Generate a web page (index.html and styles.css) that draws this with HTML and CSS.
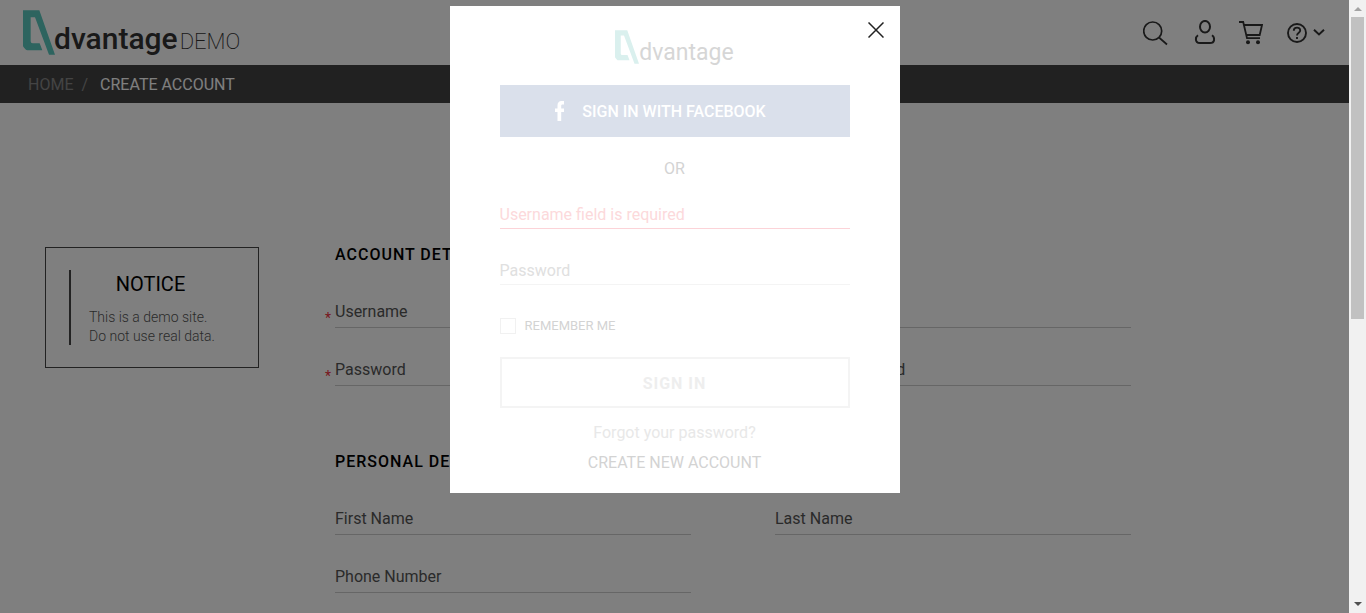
FILE: index.html
```html
<!DOCTYPE html>
<html lang="en">
<head>
<meta charset="utf-8">
<title>Advantage Demo</title>
<link rel="stylesheet" href="styles.css">
</head>
<body>
<svg class="defs" aria-hidden="true">
  <symbol id="brand-mark" viewBox="0 0 96 134">
    <path fill="currentColor" fill-rule="evenodd" d="M0 0H49L96 134H78L36 21H23V93Q23 99 29 99H50L58 120H13Q10 120 8 118L2 111Q0 109 0 106Z"/>
  </symbol>
</svg>
<div class="window">
  <div class="page">
    <header class="header">
      <a class="brand" href="#">
        <svg class="brand-mark"><use href="#brand-mark"/></svg>
        <span class="brand-name">dvantage</span>
        <span class="brand-demo">DEMO</span>
      </a>
      <div class="tools">
        <button class="tool" aria-label="Search">
          <svg width="26" height="26" viewBox="0 0 26 26" fill="none" stroke="currentColor" stroke-width="1.7"><circle cx="9.7" cy="11" r="9"/><path d="M16 17.5L24 24.5"/></svg>
        </button>
        <button class="tool" aria-label="Account">
          <svg width="22" height="26" viewBox="0 0 22 26" fill="none" stroke="currentColor" stroke-width="2"><ellipse cx="12" cy="6.7" rx="5" ry="5.8"/><path d="M5 15.3C3.300 16.500 2.900 17.800 2.900 19.200C2.900 22 4.500 23 7 23H17C19.500 23 21.100 22 21.100 19.200C21.100 17.800 20.700 16.500 19 15.300"/></svg>
        </button>
        <button class="tool" aria-label="Cart">
          <svg width="24" height="26" viewBox="0 0 24 26" fill="none" stroke="currentColor" stroke-width="1.8"><path d="M0 2H4.200L8 18.200H21"/><path d="M5 5H23L20.700 15H7"/><circle cx="9" cy="22.200" r="2" fill="currentColor" stroke="none"/><circle cx="19" cy="22.200" r="2" fill="currentColor" stroke="none"/></svg>
        </button>
        <button class="tool help" aria-label="Help">
          <svg width="20" height="26" viewBox="0 0 20 26" fill="none" stroke="currentColor" stroke-width="1.900"><circle cx="10" cy="13" r="9"/><path d="M6.800 10.800C6.800 6.600 13.200 6.600 13.200 10.500C13.200 12.800 10 12.800 10 15.600M10 17V19"/></svg>
          <svg width="12" height="26" viewBox="0 0 12 26" fill="none" stroke="currentColor" stroke-width="2"><path d="M1 9.800L6 14.500L11 9.800"/></svg>
        </button>
      </div>
    </header>
    <nav class="crumbs" aria-label="Breadcrumb">
      <a class="crumb" href="#">HOME</a>
      <span class="crumb">/</span>
      <a class="crumb current" href="#">CREATE ACCOUNT</a>
    </nav>
    <main class="main">
      <aside class="notice">
        <div class="notice-body">
          <h2 class="notice-title">NOTICE</h2>
          <p class="notice-text">This is a demo site.<br>Do not use real data.</p>
        </div>
      </aside>
      <form class="form">
        <section>
          <h3 class="form-title">ACCOUNT DETAILS</h3>
          <div class="fields">
            <div class="field"><span class="star">*</span><input class="input" type="text" placeholder="Username" aria-label="Username"></div>
            <div class="field"><input class="input" type="email" aria-label="Email"></div>
            <div class="field"><span class="star">*</span><input class="input" type="password" placeholder="Password" aria-label="Password"></div>
            <div class="field"><input class="input" type="password" placeholder="Confirm password" aria-label="Confirm password"></div>
          </div>
        </section>
        <section>
          <h3 class="form-title">PERSONAL DETAILS</h3>
          <div class="fields">
            <div class="field"><input class="input" type="text" placeholder="First Name" aria-label="First Name"></div>
            <div class="field"><input class="input" type="text" placeholder="Last Name" aria-label="Last Name"></div>
            <div class="field"><input class="input" type="tel" placeholder="Phone Number" aria-label="Phone Number"></div>
          </div>
        </section>
      </form>
    </main>
    <div class="overlay">
      <form class="dialog" role="dialog" aria-label="Sign in">
        <button class="close" type="button" aria-label="Close">
          <svg width="16" height="16" viewBox="0 0 16 16" fill="none" stroke="currentColor" stroke-width="1.500"><path d="M.5 .5L15.500 15.500M15.500 .5L.5 15.500"/></svg>
        </button>
        <div class="dialog-brand">
          <svg class="dialog-mark"><use href="#brand-mark"/></svg>
          <span class="dialog-name">dvantage</span>
        </div>
        <button class="facebook" type="button">
          <svg width="10" height="20" viewBox="0 0 10 20"><path fill="currentColor" d="M2.500 20V11H0V7.500H2.500V4.500C2.500 1.500 4 0 6.500 0H9V3.500H7.500C6.600 3.500 6.200 4 6.200 5V7.500H9V11H6.200V20Z"/></svg>
          <span>SIGN IN WITH FACEBOOK</span>
        </button>
        <p class="or">OR</p>
        <input class="dialog-input invalid" type="text" placeholder="Username field is required" aria-label="Username">
        <input class="dialog-input" type="password" placeholder="Password" aria-label="Password">
        <label class="remember"><input class="check" type="checkbox">REMEMBER ME</label>
        <button class="signin" type="button">SIGN IN</button>
        <a class="forgot" href="#">Forgot your password?</a>
        <a class="create" href="#">CREATE NEW ACCOUNT</a>
      </form>
    </div>
  </div>
  <div class="scrollbar" aria-hidden="true">
    <span class="arrow up"></span>
    <span class="thumb"></span>
    <span class="arrow down"></span>
  </div>
</div>
</body>
</html>
```
FILE: styles.css
```css
* { box-sizing: border-box; }
body { margin: 0; font-family: Roboto, "Liberation Sans", sans-serif; font-size: 16px; color: #000; }
h2, h3, p { margin: 0; }
a { color: inherit; text-decoration: none; }
button { font: inherit; color: inherit; background: none; border: 0; padding: 0; cursor: pointer; }
svg { display: block; flex: none; }
.defs { position: absolute; width: 0; height: 0; }

.window { display: flex; height: 100vh; overflow: hidden; }
.page { position: relative; flex: 1; min-width: 0; overflow: hidden; background: #fff; }

.header { display: flex; align-items: center; justify-content: space-between; height: 65px; padding: 0 24px 0 23px; color: #333; }
.brand { display: flex; align-items: baseline; height: 45px; }
.brand-mark { width: 32px; height: 45px; color: #5ac8be; align-self: flex-start; }
.brand-name { font-size: 30px; line-height: 36px; font-weight: 500; padding-top: 11px; margin-left: -1px; }
.brand-demo { font-size: 22px; font-weight: 200; margin-left: 2px; }
.tools { display: flex; gap: 24px; }
.help { display: flex; gap: 6px; }

.crumbs { display: flex; align-items: center; height: 38px; padding: 0 28px; background: #434343; }
.crumb { color: #888; margin-right: 8px; }
.current { color: #fff; margin-left: 4px; }

.main { display: flex; align-items: flex-start; gap: 76px; padding: 144px 45px 40px; }
.notice { flex: none; width: 214px; padding: 22px 28px 22px 23px; border: 1px solid #444; }
.notice-body { height: 75px; padding-top: 2px; border-left: 2px solid #444; }
.notice-title { font-size: 20px; line-height: 24px; font-weight: 400; text-align: center; }
.notice-text { font-size: 14px; line-height: 19px; font-weight: 300; color: #555; margin: 12px 0 0 18px; }

.form { flex: 1; max-width: 796px; display: grid; gap: 68px; }
.form-title { font-size: 16px; line-height: 16px; font-weight: 500; letter-spacing: 1px; margin-bottom: 31px; }
.fields { display: grid; grid-template-columns: 1fr 1fr; gap: 24px 84px; }
.field { position: relative; display: flex; }
.star { position: absolute; left: -10px; top: 14px; font-size: 14px; line-height: 20px; color: #f03040; }
.input, .dialog-input { width: 100%; height: 34px; padding: 2px 0 0; border: 0; border-bottom: 1px solid #ccc; border-radius: 0; outline: 0; background: none; font: inherit; color: #444; }
.input::placeholder { color: #555; opacity: 1; }

.overlay { position: absolute; inset: 0; padding: 6px; background: rgba(0, 0, 0, .5); }
.dialog { position: relative; display: flex; flex-direction: column; align-items: center; width: 450px; max-width: 100%; margin: 0 auto; padding: 24px 50px 20px; background: #fff; }
.close { position: absolute; top: 16px; right: 16px; color: #222; }
.dialog-brand { display: flex; align-items: flex-start; height: 34px; color: #d6d6d6; }
.dialog-mark { width: 24px; height: 34px; color: #daf0ee; }
.dialog-name { font-size: 23px; line-height: 28px; padding-top: 9px; }
.facebook { display: flex; align-items: center; justify-content: center; gap: 17px; width: 100%; height: 52px; margin-top: 21px; padding-right: 28px; background: #dae0eb; color: #fff; font-weight: 500; }
.or { margin: 22px 0 20px; line-height: 20px; color: #d3d3d3; }
.dialog-input { height: 30px; border-color: #f4f4f4; }
.dialog-input::placeholder { color: #e0e0e0; opacity: 1; }
.dialog-input + .dialog-input { margin-top: 26px; }
.dialog-input.invalid { border-bottom-color: #fcd3d8; }
.dialog-input.invalid::placeholder { color: #fcd9db; }
.remember { display: flex; align-items: center; gap: 9px; align-self: flex-start; height: 16px; margin-top: 33px; font-size: 13px; line-height: 18px; color: #d3d3d3; }
.check { appearance: none; width: 16px; height: 16px; margin: 0; border: 1px solid #f1f1f1; background: #fff; }
.signin { width: 100%; height: 51px; margin-top: 23px; padding-top: 2px; border: 2px solid #f4f4f4; color: #eee; font-weight: 700; letter-spacing: 1px; }
.forgot { margin-top: 15px; line-height: 20px; color: #e8e8e8; }
.create { margin-top: 10px; line-height: 20px; color: #d3d3d3; }

.scrollbar { display: flex; flex-direction: column; align-items: center; flex: none; width: 17px; background: #f1f1f1; }
.arrow { border: 4px solid transparent; }
.up { margin: 7px 0 6px; border-top-width: 0; border-bottom-color: #a3a3a3; }
.thumb { width: 13px; height: 302px; background: #c1c1c1; }
.down { margin: auto 0 7px; border-bottom-width: 0; border-top-color: #505050; }
```
